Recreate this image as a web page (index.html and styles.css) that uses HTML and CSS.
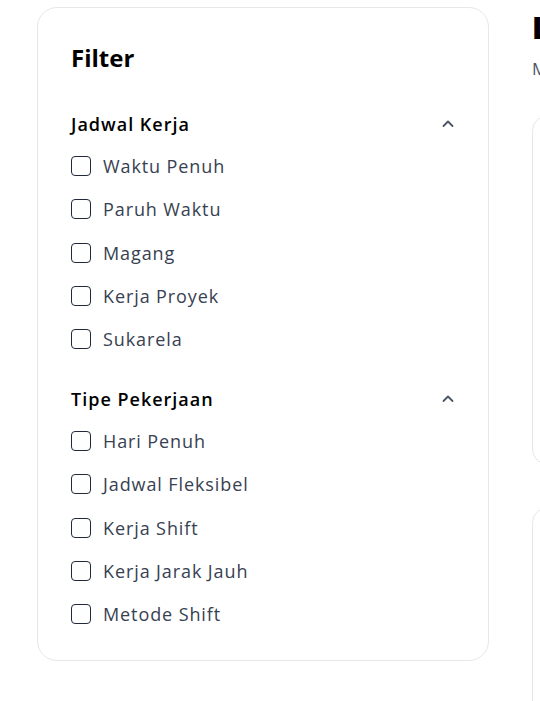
FILE: index.html
```html
<!DOCTYPE html>
<html lang="id">
<head>
<meta charset="utf-8">
<title>Filter</title>
<link rel="stylesheet" href="styles.css">
</head>
<body>
<div class="page">
  <aside class="filter-card">
    <h2 class="filter-title">Filter</h2>

    <section class="group">
      <div class="group-head">
        <span class="group-name">Jadwal Kerja</span>
        <svg class="chev" width="14" height="14" viewBox="0 0 14 14" fill="none"><path d="M2.5 9L7 4.5L11.5 9" stroke="currentColor" stroke-width="1.8" stroke-linecap="round" stroke-linejoin="round"/></svg>
      </div>
      <ul class="options">
        <li class="option"><span class="box"></span><span class="label">Waktu Penuh</span></li>
        <li class="option"><span class="box"></span><span class="label">Paruh Waktu</span></li>
        <li class="option"><span class="box"></span><span class="label">Magang</span></li>
        <li class="option"><span class="box"></span><span class="label">Kerja Proyek</span></li>
        <li class="option"><span class="box"></span><span class="label">Sukarela</span></li>
      </ul>
    </section>

    <section class="group">
      <div class="group-head">
        <span class="group-name">Tipe Pekerjaan</span>
        <svg class="chev" width="14" height="14" viewBox="0 0 14 14" fill="none"><path d="M2.5 9L7 4.5L11.5 9" stroke="currentColor" stroke-width="1.8" stroke-linecap="round" stroke-linejoin="round"/></svg>
      </div>
      <ul class="options">
        <li class="option"><span class="box"></span><span class="label">Hari Penuh</span></li>
        <li class="option"><span class="box"></span><span class="label">Jadwal Fleksibel</span></li>
        <li class="option"><span class="box"></span><span class="label">Kerja Shift</span></li>
        <li class="option"><span class="box"></span><span class="label">Kerja Jarak Jauh</span></li>
        <li class="option"><span class="box"></span><span class="label">Metode Shift</span></li>
      </ul>
    </section>
  </aside>

  <main class="results">
    <h1 class="results-title">Lowongan Kerja</h1>
    <p class="results-sub">Menampilkan 120 lowongan</p>
    <div class="job-card tall"></div>
    <div class="job-card"></div>
  </main>
</div>
</body>
</html>
```

FILE: styles.css
```css
html, body {
  margin: 0;
  padding: 0;
  background: #ffffff;
  overflow: hidden;
}

body {
  font-family: "Open Sans", "Noto Sans", sans-serif;
  color: #111827;
}

.page {
  display: flex;
  align-items: flex-start;
  gap: 43px;
  padding: 7px 0 0 37px;
  width: 540px;
  box-sizing: border-box;
  overflow: hidden;
}

.filter-card {
  flex: 0 0 452px;
  box-sizing: border-box;
  border: 1px solid #e5e7eb;
  border-radius: 20px;
  padding: 34px 33px 34px;
  background: #fff;
}

.filter-title {
  margin: 0;
  font-size: 24px;
  line-height: 32px;
  font-weight: 700;
  color: #000;
}

.group {
  margin-top: 37px;
}

.group + .group {
  margin-top: 35px;
}

.group-head {
  display: flex;
  align-items: center;
  justify-content: space-between;
  height: 26px;
}

.group-name {
  font-size: 18px;
  font-weight: 600;
  letter-spacing: 1px;
  color: #000;
}

.chev {
  color: #4b5563;
}

.options {
  list-style: none;
  margin: 17px 0 0;
  padding: 0;
  display: flex;
  flex-direction: column;
  gap: 19.3px;
}

.option {
  display: flex;
  align-items: center;
  gap: 12px;
  height: 24px;
}

.box {
  flex: 0 0 auto;
  width: 20px;
  height: 20px;
  box-sizing: border-box;
  border: 1.5px solid #1f2937;
  border-radius: 4px;
}

.label {
  font-size: 18px;
  letter-spacing: 0.9px;
  color: #374151;
}

.results {
  flex: 0 0 600px;
  padding-top: 2px;
}

.results-title {
  margin: 0;
  font-size: 30px;
  line-height: 38px;
  font-weight: 800;
  color: #000;
}

.results-sub {
  margin: 10px 0 0;
  font-size: 17px;
  line-height: 24px;
  color: #4b5563;
}

.job-card {
  margin-top: 34px;
  height: 348px;
  border: 1px solid #e5e7eb;
  border-radius: 16px;
}

.job-card + .job-card {
  margin-top: 42px;
  height: 400px;
}
```
